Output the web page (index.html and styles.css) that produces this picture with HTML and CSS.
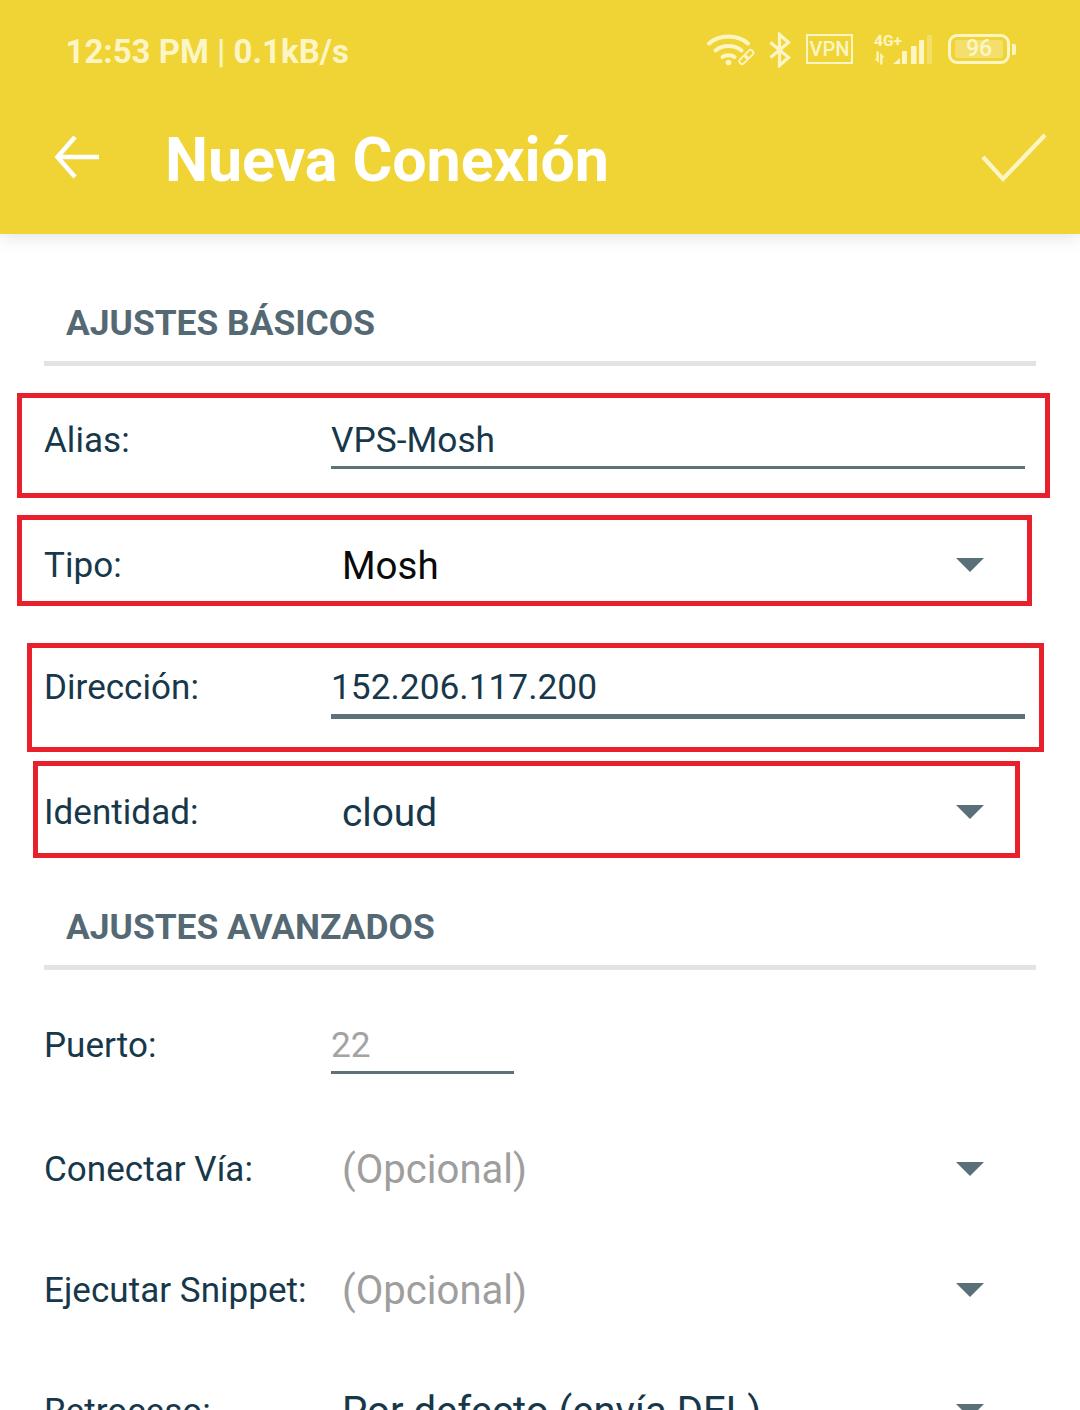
FILE: index.html
```html
<!DOCTYPE html>
<html lang="es">
<head>
<meta charset="utf-8">
<title>Nueva Conexión</title>
<link rel="stylesheet" href="styles.css">
</head>
<body>
<div class="screen">
  <header class="appbar">
    <div class="status">
      <span class="clock">12:53 PM | 0.1kB/s</span>
      <div class="status-icons">
        <svg class="ic-wifi" width="48" height="34" viewBox="0 0 48 34" fill="none" stroke="currentColor" stroke-linecap="round">
          <path d="M2 10.500C12 1 31 1 41 10.500" stroke-width="4"/>
          <path d="M8.500 17.500C15.500 11.500 27.500 11.500 34.500 17.500" stroke-width="4"/>
          <path d="M15.500 24C18.500 21.500 24.500 21.500 27.500 24" stroke-width="4"/>
          <circle cx="21.500" cy="29.500" r="2.800" fill="currentColor" stroke="none"/>
          <g stroke-width="1.800" transform="rotate(-45 39 24)">
            <rect x="30.500" y="21.500" width="9.500" height="5.500" rx="2.700"/>
            <rect x="38.500" y="21.500" width="9.500" height="5.500" rx="2.700"/>
          </g>
        </svg>
        <svg class="ic-bt" width="22" height="36" viewBox="0 0 22 36" fill="none" stroke="currentColor" stroke-width="3.200">
          <path d="M1.500 10.500L19.500 25.500L10.500 33.500V2.500L19.500 10.500L1.500 25.500"/>
        </svg>
        <span class="vpn">VPN</span>
        <svg class="ic-signal" width="58" height="40" viewBox="0 -4 58 40" fill="currentColor">
          <text class="net" x="0" y="12">4G+</text>
          <path d="M3.500 17.500h2.300v11.500l-4.300-4.300h2zM9.500 30.500h-2.300v-11.500l4.300 4.300h-2z" transform="translate(-1 0)"/>
          <path d="M19 30l7-6v6z"/>
          <rect x="28" y="17" width="5" height="13"/>
          <rect x="37" y="12" width="5.500" height="18"/>
          <rect x="45" y="6" width="5" height="24"/>
          <rect x="53" y="1" width="5" height="29" opacity=".35"/>
        </svg>
        <div class="battery">
          <div class="battery-body"><span class="battery-level">96</span></div>
          <span class="battery-nub"></span>
        </div>
      </div>
    </div>
    <div class="toolbar">
      <svg class="ic-back" width="46" height="46" viewBox="0 0 46 46" fill="none" stroke="currentColor" stroke-width="4.500">
        <path d="M45 23H4M21 3L3.500 23L21 43"/>
      </svg>
      <h1 class="title">Nueva Conexión</h1>
      <svg class="ic-check" width="66" height="52" viewBox="0 0 66 52" fill="none" stroke="currentColor" stroke-width="4.200">
        <path d="M2 25L22 47L64 3"/>
      </svg>
    </div>
  </header>

  <main class="form">
    <h2 class="section first">AJUSTES BÁSICOS</h2>
    <div class="row alias">
      <span class="label">Alias:</span>
      <span class="input">VPS-Mosh</span>
    </div>
    <div class="row tipo">
      <span class="label">Tipo:</span>
      <div class="select"><span class="value black">Mosh</span><i class="caret"></i></div>
    </div>
    <div class="row dir">
      <span class="label">Dirección:</span>
      <span class="input focused">152.206.117.200</span>
    </div>
    <div class="row ident">
      <span class="label">Identidad:</span>
      <div class="select"><span class="value small">cloud</span><i class="caret"></i></div>
    </div>

    <h2 class="section second">AJUSTES AVANZADOS</h2>
    <div class="row puerto">
      <span class="label">Puerto:</span>
      <span class="input short hint">22</span>
    </div>
    <div class="row via">
      <span class="label">Conectar Vía:</span>
      <div class="select"><span class="value muted">(Opcional)</span><i class="caret"></i></div>
    </div>
    <div class="row snippet">
      <span class="label">Ejecutar Snippet:</span>
      <div class="select"><span class="value muted">(Opcional)</span><i class="caret"></i></div>
    </div>
    <div class="row retro">
      <span class="label">Retroceso:</span>
      <div class="select"><span class="value">Por defecto (envía DEL)</span><i class="caret"></i></div>
    </div>
  </main>

  <div class="mark mark-alias"></div>
  <div class="mark mark-tipo"></div>
  <div class="mark mark-dir"></div>
  <div class="mark mark-ident"></div>
</div>
</body>
</html>
```
FILE: styles.css
```css
* { box-sizing: border-box; }
html, body { margin: 0; padding: 0; background: #fff; }
body { font-family: Roboto, "Liberation Sans", sans-serif; }

.screen { position: relative; width: 1080px; height: 1410px; overflow: hidden; background: #fff; }

.appbar {
  position: relative;
  height: 234px;
  background: #f0d335;
  box-shadow: 0 2px 18px rgba(0, 0, 0, .13);
  z-index: 1;
}

.status {
  display: flex;
  align-items: center;
  justify-content: space-between;
  height: 100px;
  padding: 0 64px 0 65.500px;
  color: #fdf6c4;
}
.clock { font-size: 33px; font-weight: 700; margin-top: 2px; }
.status-icons { display: flex; align-items: center; }
.ic-wifi { margin-right: 14px; }
.ic-bt { margin-right: 15px; }
.vpn {
  width: 47px; height: 30px;
  margin-top: -2px;
  border: 2px solid currentColor;
  font-size: 20px; font-weight: 500; line-height: 26px; text-align: center;
  margin-right: 21px;
}
.net { font: 700 15.500px Roboto, sans-serif; }
.ic-signal { margin-right: 16px; }
.battery { display: flex; align-items: center; margin-top: -2px; }
.battery-body {
  width: 62px; height: 30px;
  border: 3px solid currentColor;
  border-radius: 9px;
  padding: 3px 4px;
  display: flex;
}
.battery-level {
  flex: 1;
  background: rgba(255, 255, 255, .28);
  border-radius: 2px;
  font-size: 23px; font-weight: 500; line-height: 18px; text-align: center;
}
.battery-nub { width: 4px; height: 11px; margin-left: 2px; background: currentColor; border-radius: 0 2px 2px 0; }

.toolbar {
  display: flex;
  align-items: center;
  height: 118px;
  padding: 0 33px 0 54px;
  color: #fff;
}
.ic-back { flex: none; margin-top: -5px; }
.title { flex: 1; margin: 2px 0 0 65px; font-size: 61px; font-weight: 700; line-height: 1; letter-spacing: -.1px; }
.ic-check { color: #fdf6c4; margin-top: -2px; }

.form { padding: 0 44px; }
.section {
  margin: 0;
  padding-left: 22px;
  border-bottom: 5px solid #e3e3e3;
  color: #546973;
  font-size: 35.400px;
  font-weight: 700;
  line-height: 40px;
}
.section.first { margin-top: 69px; height: 63px; }
.section.second { margin-top: 34px; height: 63px; }

.row {
  display: flex;
  align-items: center;
  height: 122px;
  color: #17384a;
}
.alias { margin-top: 13px; }
.tipo { margin-top: 3px; }
.ident { margin-top: 3px; }
.puerto { margin-top: 14px; }
.via { margin-top: 2px; }
.snippet { margin-top: -1px; }
.retro { margin-top: -1px; }

.label { flex: none; width: 287px; font-size: 35px; letter-spacing: .04px; white-space: nowrap; }

.input {
  flex: none;
  width: 694px;
  height: 58px;
  font-size: 35.300px;
  line-height: 58px;
  color: #17384a;
  border-bottom: 3px solid #5f7178;
}
.input.focused { height: 64px; padding-top: 3px; border-bottom-width: 5px; }
.input.short { width: 183px; }
.input.hint { color: #a3a3a3; }

.select {
  flex: 1;
  display: flex;
  align-items: center;
  justify-content: space-between;
  padding: 0 52px 0 11px;
}
.value { font-size: 40.100px; color: #17384a; }
.value.black { font-size: 38.500px; color: #0a0a0a; }
.value.small { font-size: 38.800px; }
.value.muted { color: #9e9e9e; }
.caret {
  width: 0; height: 0;
  border-left: 14px solid transparent;
  border-right: 14px solid transparent;
  border-top: 14px solid #5a7079;
}

.mark { position: absolute; border: 5px solid #e8202c; z-index: 2; pointer-events: none; }
.mark-alias { left: 17px; top: 393px; width: 1033px; height: 105px; }
.mark-tipo { left: 17px; top: 515px; width: 1015px; height: 91px; }
.mark-dir { left: 27px; top: 643px; width: 1017px; height: 109px; }
.mark-ident { left: 33px; top: 761px; width: 987px; height: 97px; }
```
